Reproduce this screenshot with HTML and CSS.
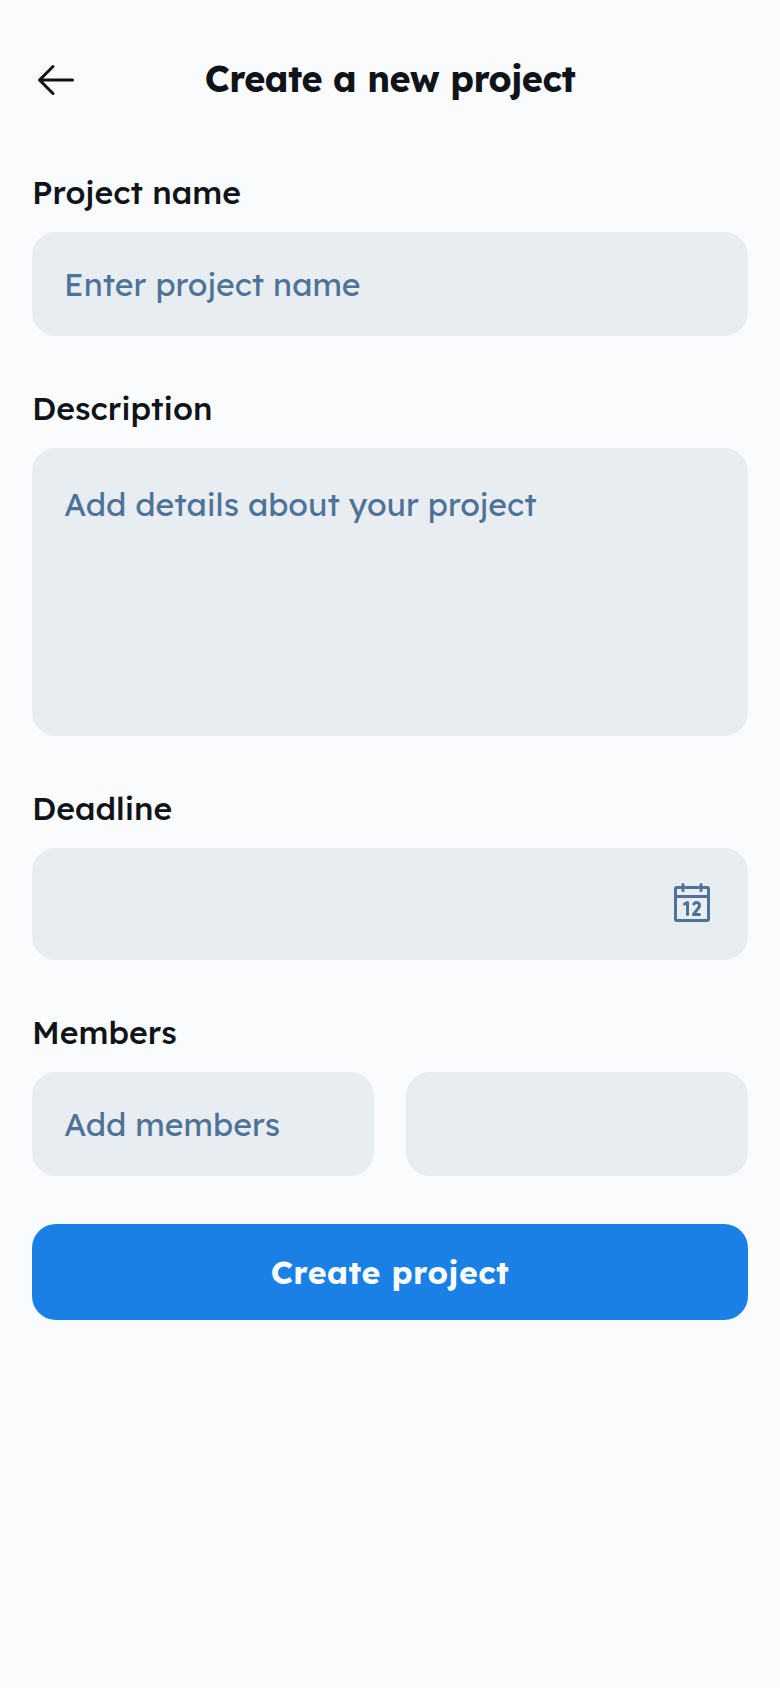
FILE: index.html
```html
<!DOCTYPE html>
<html lang="en">
<head>
<meta charset="utf-8">
<title>Create a new project</title>
<link rel="stylesheet" href="styles.css">
</head>
<body>
<main class="screen">
  <header class="header">
    <svg class="icon back" viewBox="0 0 256 256" aria-label="Back"><path d="M224,128a8,8,0,0,1-8,8H59.31l58.35,58.34a8,8,0,0,1-11.32,11.32l-72-72a8,8,0,0,1,0-11.32l72-72a8,8,0,0,1,11.32,11.32L59.31,120H216A8,8,0,0,1,224,128Z"/></svg>
    <h1 class="title">Create a new project</h1>
  </header>
  <form class="form">
    <section class="field">
      <div class="label">Project name</div>
      <div class="input">Enter project name</div>
    </section>
    <section class="field">
      <div class="label">Description</div>
      <div class="input area">Add details about your project</div>
    </section>
    <section class="field">
      <div class="label">Deadline</div>
      <div class="input date">
        <svg class="icon" viewBox="0 0 256 256" aria-label="Calendar"><path d="M208,32H184V24a8,8,0,0,0-16,0v8H88V24a8,8,0,0,0-16,0v8H48A16,16,0,0,0,32,48V208a16,16,0,0,0,16,16H208a16,16,0,0,0,16-16V48A16,16,0,0,0,208,32ZM72,48v8a8,8,0,0,0,16,0V48h80v8a8,8,0,0,0,16,0V48h24V80H48V48ZM208,208H48V96H208V208Zm-96-88v64a8,8,0,0,1-16,0V132.94l-4.42,2.22a8,8,0,0,1-7.16-14.32l16-8A8,8,0,0,1,112,120Zm59.16,30.45L152,176h16a8,8,0,0,1,0,16H136a8,8,0,0,1-6.4-12.8l28.78-38.37A8,8,0,1,0,145.07,132a8,8,0,1,1-13.85-8A24,24,0,0,1,176,136,23.76,23.76,0,0,1,171.16,150.45Z"/></svg>
      </div>
    </section>
    <section class="field">
      <div class="label">Members</div>
      <div class="row">
        <div class="input">Add members</div>
        <div class="input"></div>
      </div>
    </section>
    <button class="submit" type="button">Create project</button>
  </form>
</main>
</body>
</html>
```
FILE: styles.css
```css
* { box-sizing: border-box; }
body { margin: 0; background: #f9fbfd; color: #101418; font-family: Lexend, Inter, sans-serif; }
.screen { min-height: 1688px; padding: 32px; }
.header { display: flex; align-items: center; height: 96px; }
.icon { width: 48px; height: 48px; fill: currentColor; }
.title { flex: 1; margin: 0; padding: 0 48px 3px 0; text-align: center; font-size: 36px; line-height: 45px; font-weight: 700; letter-spacing: -0.015em; white-space: nowrap; }
.form { display: flex; flex-direction: column; gap: 48px; padding-top: 40px; }
.field { display: flex; flex-direction: column; gap: 16px; }
.label { height: 48px; font-size: 32px; line-height: 48px; font-weight: 500; }
.input { height: 104px; padding: 28px 32px; border-radius: 24px; background: #e8edf1; color: #4e7397; font-size: 32px; line-height: 48px; white-space: nowrap; }
.area { height: 288px; padding-top: 32px; }
.date { display: flex; align-items: center; justify-content: flex-end; height: 112px; }
.row { display: grid; grid-template-columns: 1fr 1fr; gap: 32px; }
.submit { height: 96px; padding: 0; border: 0; border-radius: 24px; background: #1b80e6; color: #f9fbfd; font: 700 32px/48px Lexend, Inter, sans-serif; letter-spacing: 0.015em; }
```
